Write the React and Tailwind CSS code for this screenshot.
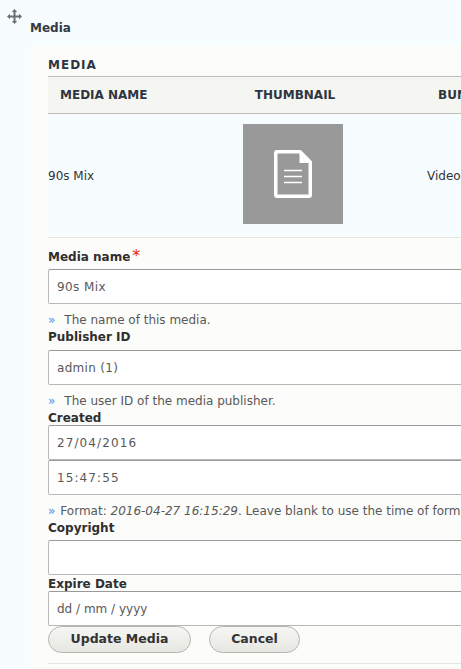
function MoveIcon() {
  return (
    <svg className="h-[15px] w-[15px]" viewBox="0 0 15 15" fill="#6f6f6f">
      <path d="M7.5 0 10.200 3H8.500V6.500H12V4.800L15 7.500 12 10.200V8.500H8.500V12H10.200L7.500 15 4.800 12H6.500V8.500H3V10.200L0 7.500 3 4.800V6.500H6.500V3H4.800Z" />
    </svg>
  );
}

function DocIcon() {
  return (
    <svg className="h-12 w-[38px]" viewBox="0 0 38 48" fill="none" stroke="#fff">
      <path d="M3 1.750H26L36.250 12V45a1.250 1.250 0 0 1-1.250 1.250H3A1.250 1.250 0 0 1 1.750 45V3A1.250 1.250 0 0 1 3 1.750Z" strokeWidth="3.500" strokeLinejoin="round" />
      <path d="M25.500 3V13H36L25.500 3Z" fill="#fff" stroke="none" />
      <path d="M10 20.500H28M10 26.500H28M10 32.500H28" strokeWidth="1.700" />
    </svg>
  );
}

function Field({ value = '', className = '' }) {
  return (
    <input
      readOnly
      value={value}
      className={`block h-[35px] w-[520px] rounded-[2px] border border-[#b8b8b8] border-t-[#9a9a9a] bg-white px-2 pt-px text-[12px] text-[#595959] outline-none ${className}`}
    />
  );
}

function Help({ children }) {
  return (
    <p className="whitespace-nowrap text-[12px] leading-[15px] text-[#595959]">
      <span className="mr-[9px] text-[#4b8ef0]">»</span>
      {children}
    </p>
  );
}

function Label({ children, className = '' }) {
  return <div className={`text-[12px] font-bold leading-[15px] text-[#2f2f2f] ${className}`}>{children}</div>;
}

export default function App() {
  return (
    <div className="h-[669px] w-full overflow-hidden bg-[#f7fcff] font-['DejaVu_Sans',sans-serif]">
      <div className="flex pl-[7px] pt-[9px]">
        <MoveIcon />
        <div className="ml-2 mt-[12px] text-[12px] font-bold leading-[15px] text-[#333a45]">Media</div>
      </div>

      <div className="ml-[30px] mt-[10px] w-[560px] bg-[#fcfcfa] pl-[18px] pt-[12px]">
        <div className="text-[12px] font-bold leading-[15px] tracking-[1px] text-[#2f3542]">MEDIA</div>

        <div className="mt-[3px] w-[520px]">
          <div className="flex h-[38px] items-center border-y border-[#bfbeb6] bg-[#f5f5f2] text-[12px] font-bold text-[#2f3542]">
            <div className="w-[195px] pl-3">MEDIA NAME</div>
            <div className="w-[100px] whitespace-nowrap pl-1 text-center">THUMBNAIL</div>
            <div className="ml-[95px]">BUNDLE</div>
          </div>
          <div className="flex h-[124px] items-center border-b border-[#e6e6e1] bg-[#f7fcff] text-[12px] text-[#333]">
            <div className="w-[195px]">90s Mix</div>
            <div className="flex h-[100px] w-[100px] items-center justify-center self-start mt-[10px] bg-[#999]">
              <DocIcon />
            </div>
            <div className="ml-[84px]">Video</div>
          </div>
        </div>

        <div className="mt-[12px] flex items-start">
          <Label>Media name</Label>
          <span className="ml-[2px] text-[16px] leading-[12px] text-[#e62600]">*</span>
        </div>
        <Field value="90s Mix" className="mt-1 tracking-[0.4px]" />
        <div className="mt-[9px]"><Help>The name of this media.</Help></div>

        <Label className="mt-[2px]">Publisher ID</Label>
        <Field value="admin (1)" className="mt-[5px] tracking-[0.3px]" />
        <div className="mt-[9px]"><Help>The user ID of the media publisher.</Help></div>

        <Label className="mt-[2px]">Created</Label>
        <Field value="27/04/2016" className="-mt-px tracking-[1.100px]" />
        <Field value="15:47:55" className="tracking-[1.100px]" />
        <p className="mt-[9px] whitespace-nowrap text-[12px] leading-[15px] text-[#595959]">
          <span className="mr-[5px] text-[#4b8ef0]">»</span>
          Format: <em>2016-04-27 16:15:29</em>. Leave blank to use the time of form submission.
        </p>

        <Label className="mt-[2px]">Copyright</Label>
        <Field className="mt-1" />
        <Label className="mt-[2px]">Expire Date</Label>
        <Field value="dd / mm / yyyy" className="-mt-px" />

        <div className="flex gap-[18px]">
          <button className="h-[27px] w-[143px] rounded-full border border-[#b5b5ae] bg-gradient-to-b from-[#f6f6f3] to-[#e7e7e2] text-[12.500px] font-bold text-[#333]">Update Media</button>
          <button className="h-[27px] w-[91px] rounded-full border border-[#b5b5ae] bg-gradient-to-b from-[#f6f6f3] to-[#e7e7e2] text-[12.500px] font-bold text-[#333]">Cancel</button>
        </div>
        <div className="mt-[10px] h-px w-[520px] bg-[#e6e6e1]" />
        <div className="h-[10px]" />
      </div>
    </div>
  );
}
